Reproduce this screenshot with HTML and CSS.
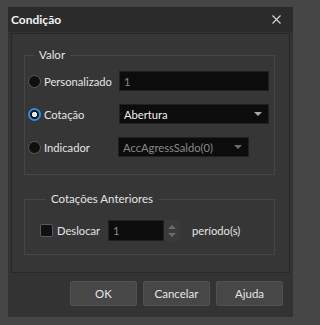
FILE: index.html
```html
<!DOCTYPE html>
<html lang="pt">
<head>
<meta charset="utf-8">
<title>Condição</title>
<link rel="stylesheet" href="styles.css">
</head>
<body>
<div class="dialog">
  <div class="titlebar">
    <span class="title">Condição</span>
    <svg class="close" width="9" height="9" viewBox="0 0 9 9"><path d="M0.5 0.5 L8.5 8.5 M8.5 0.5 L0.5 8.5" stroke="#d8d8d8" stroke-width="1.1" fill="none"/></svg>
  </div>
  <div class="panel">
    <fieldset class="group group-valor">
      <legend>Valor</legend>
      <div class="grid">
        <div class="opt"><span class="radio"></span><span>Personalizado</span></div>
        <div class="field wide muted">1</div>
        <div class="opt"><span class="radio checked"></span><span>Cotação</span></div>
        <div class="field wide combo"><span>Abertura</span><span class="arrow"></span></div>
        <div class="opt"><span class="radio"></span><span>Indicador</span></div>
        <div class="field narrow combo muted"><span>AccAgressSaldo(0)</span><span class="arrow dim"></span></div>
      </div>
    </fieldset>
    <fieldset class="group group-prev">
      <legend>Cotações Anteriores</legend>
      <div class="row">
        <span class="check"></span><span class="check-label">Deslocar</span>
        <div class="field spin muted">1</div>
        <div class="spinbtns"><span class="up"></span><span class="down"></span></div>
        <span class="unit">período(s)</span>
      </div>
    </fieldset>
  </div>
  <div class="buttons">
    <button class="btn">OK</button>
    <button class="btn">Cancelar</button>
    <button class="btn">Ajuda</button>
  </div>
</div>
</body>
</html>
```
FILE: styles.css
```css
html, body {
  margin: 0;
  padding: 0;
}
body {
  width: 303px;
  height: 325px;
  overflow: hidden;
  background: #464646;
  font-family: Lato, "Open Sans", sans-serif;
  font-size: 11.2px;
  color: #e4e4e4;
}
.dialog {
  margin: 7px 0 0 8px;
  width: 285px;
  height: 310px;
  background: #333333;
  display: flex;
  flex-direction: column;
}
.titlebar {
  height: 25px;
  flex: none;
  background: #2b2b2b;
  display: flex;
  align-items: center;
  justify-content: space-between;
  padding: 0 12px 0 3px;
}
.title {
  font-weight: bold;
  font-size: 12px;
  color: #f2f2f2;
}
.close {
  display: block;
}
.panel {
  margin: 1px 3px 0;
  height: 240px;
  box-sizing: border-box;
  border: 1px solid #282828;
  background: #363636;
  padding: 13px 14px 0 12px;
}
.group {
  margin: 0;
  border: 1px solid #464646;
  padding: 0;
  min-width: 0;
}
.group legend {
  margin-left: 6px;
  padding: 0 5px;
  line-height: 16px;
  font-size: 11.5px;
  color: #e4e4e4;
}
.group-valor {
  padding: 8px 0 17px 3px;
}
.group-prev {
  margin-top: 16px;
  padding: 13px 0 13px 15px;
}
.grid {
  display: grid;
  grid-template-columns: 91px auto;
  grid-auto-rows: 20px;
  row-gap: 13px;
  justify-items: start;
}
.opt {
  display: flex;
  align-items: center;
  gap: 3px;
}
.radio {
  width: 13px;
  height: 13px;
  box-sizing: border-box;
  border-radius: 50%;
  border: 1px solid #5a5a5a;
  background: #101010;
  flex: none;
}
.radio.checked {
  border: 2px solid #2f8ee8;
  background: #151515 radial-gradient(circle, #e8e8e8 0 2.4px, transparent 2.9px);
}
.field {
  box-sizing: border-box;
  height: 20px;
  background: #0c0c0c;
  border: 1px solid #202020;
  display: flex;
  align-items: center;
  padding: 0 4px;
  color: #f0f0f0;
}
.field.muted {
  color: #8a8a8a;
}
.wide {
  width: 150px;
}
.narrow {
  width: 131px;
  margin-left: -1px;
}
.combo {
  justify-content: space-between;
  padding-right: 6px;
}
.arrow {
  width: 0;
  height: 0;
  border-left: 4px solid transparent;
  border-right: 4px solid transparent;
  border-top: 4px solid #a8a8a8;
}
.arrow.dim {
  border-top-color: #6e6e6e;
}
.row {
  display: flex;
  align-items: center;
  height: 21px;
}
.check {
  width: 13px;
  height: 13px;
  box-sizing: border-box;
  border: 1px solid #5a5a5a;
  border-radius: 2px;
  background: #101010;
  flex: none;
}
.check-label {
  margin-left: 4px;
  width: 51px;
}
.spin {
  width: 56px;
  height: 21px;
}
.spinbtns {
  width: 16px;
  height: 21px;
  background: #3a3a3a;
  display: flex;
  flex-direction: column;
  align-items: center;
  justify-content: center;
  gap: 4px;
}
.up, .down {
  width: 0;
  height: 0;
  border-left: 4px solid transparent;
  border-right: 4px solid transparent;
}
.up {
  border-bottom: 4px solid #6a6a6a;
}
.down {
  border-top: 4px solid #6a6a6a;
}
.unit {
  margin-left: 12px;
}
.buttons {
  display: flex;
  justify-content: flex-end;
  gap: 6px;
  padding: 8px 10px 0 0;
}
.btn {
  width: 67px;
  height: 25px;
  box-sizing: border-box;
  background: #474747;
  border: 1px solid #515151;
  border-radius: 2px;
  color: #e6e6e6;
  font-family: Lato, "Open Sans", sans-serif;
  font-size: 11.5px;
  padding: 0;
}
```
